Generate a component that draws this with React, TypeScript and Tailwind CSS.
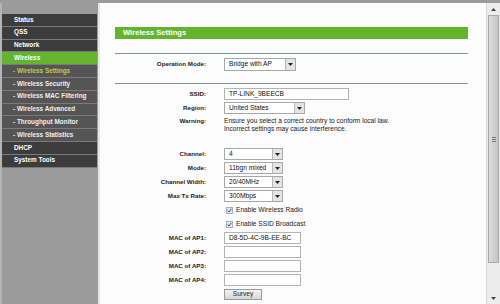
import React from "react";

const menu: { label: string; kind: "main" | "active" | "sub" | "current" }[] = [
  { label: "Status", kind: "main" },
  { label: "QSS", kind: "main" },
  { label: "Network", kind: "main" },
  { label: "Wireless", kind: "active" },
  { label: "- Wireless Settings", kind: "current" },
  { label: "- Wireless Security", kind: "sub" },
  { label: "- Wireless MAC Filtering", kind: "sub" },
  { label: "- Wireless Advanced", kind: "sub" },
  { label: "- Throughput Monitor", kind: "sub" },
  { label: "- Wireless Statistics", kind: "sub" },
  { label: "DHCP", kind: "main" },
  { label: "System Tools", kind: "main" },
];

const Arrow = () => (
  <span className="flex h-full w-[10px] items-center justify-center border-l border-[#b8b8b8] bg-[#e4e4e4]">
    <svg width="5" height="3" viewBox="0 0 5 3">
      <path d="M0 0h5L2.5 3z" fill="#222" />
    </svg>
  </span>
);

const Select = ({ value, w }: { value: string; w: string }) => (
  <div className={`flex h-[12px] ${w} items-center border border-[#a8a8a8] bg-white`}>
    <span className="flex-1 pl-[4px] text-[6.6px] leading-none text-[#111]">{value}</span>
    <Arrow />
  </div>
);

const Input = ({ value, w }: { value?: string; w: string }) => (
  <div className={`flex h-[12px] ${w} items-center border border-[#b4b4b4] bg-white pl-[4px] text-[6.6px] leading-none text-[#111]`}>
    {value}
  </div>
);

const Row = ({ label, children, h = "h-[14px]" }: { label: string; children?: React.ReactNode; h?: string }) => (
  <div className={`flex ${h} items-center`}>
    <div className="w-[92px] pr-[1px] text-right text-[6.2px] font-bold leading-none text-[#222]">{label}</div>
    <div className="ml-[17px] flex items-center">{children}</div>
  </div>
);

const Check = ({ label }: { label: string }) => (
  <div className="flex h-[14px] items-center pl-[109px]">
    <span className="ml-[2px] flex h-[7px] w-[7px] items-center justify-center border border-[#9fb0c4] bg-[#dfe7f1]">
      <svg width="5" height="5" viewBox="0 0 5 5">
        <path d="M0.6 2.6l1.3 1.4L4.4 0.8" stroke="#3a4a70" strokeWidth="1" fill="none" />
      </svg>
    </span>
    <span className="ml-[3px] text-[6.6px] leading-none text-[#222]">{label}</span>
  </div>
);

export default function App() {
  return (
    <div
      className="flex h-[304px] w-[500px] overflow-hidden bg-[#9b9b9b] pt-[3px]"
      style={{ fontFamily: '"Liberation Sans", Arial, sans-serif' }}
    >
      <aside className="w-[98px] border-l-[2px] border-[#b4b4b4] pt-[11px]">
        {menu.map((m) => (
          <div
            key={m.label}
            className={`flex h-[12.8px] w-[95px] items-center border-b border-[#7a7a7a] text-[6.4px] font-bold leading-none ${
              m.kind === "main"
                ? "bg-[#3c3c3c] pl-[12px] text-white"
                : m.kind === "active"
                ? "bg-[#62b52d] pl-[12px] text-white"
                : m.kind === "current"
                ? "bg-[#555555] pl-[11px] text-[#b6d33c]"
                : "bg-[#555555] pl-[11px] text-[#f0f0f0]"
            }`}
          >
            {m.label}
          </div>
        ))}
      </aside>
      <main className="flex-1 border-l-[2px] border-[#e6e6e6] bg-[#fcfcfc] pl-[15px] pt-[24px]">
        <div className="w-[353px]">
          <div className="flex h-[12px] items-center bg-[#63b52d] pl-[8px] text-[7.6px] font-bold leading-none text-white">
            Wireless Settings
          </div>
          <div className="mt-[14px] h-px bg-[#7c9999]" />
          <div className="pt-[3px]">
            <Row label="Operation Mode:" h="h-[14px]">
              <Select value="Bridge with AP" w="w-[72px] h-[13px]" />
            </Row>
          </div>
          <div className="mt-[12px] h-px bg-[#7c9999]" />
          <div className="pt-[3px]">
            <Row label="SSID:">
              <Input value="TP-LINK_9BEECB" w="w-[125px]" />
            </Row>
            <Row label="Region:">
              <Select value="United States" w="w-[81px]" />
            </Row>
            <div className="flex h-[22px] items-start pt-[2px]">
              <div className="w-[92px] pr-[1px] pt-[1px] text-right text-[6.2px] font-bold leading-none text-[#222]">
                Warning:
              </div>
              <div className="ml-[17px] text-[6.6px] leading-[8px] text-[#222]">
                Ensure you select a correct country to conform local law.
                <br />
                Incorrect settings may cause interference.
              </div>
            </div>
            <div className="h-[10px]" />
            <Row label="Channel:">
              <Select value="4" w="w-[59px]" />
            </Row>
            <Row label="Mode:">
              <Select value="11bgn mixed" w="w-[59px]" />
            </Row>
            <Row label="Channel Width:">
              <Select value="20/40MHz" w="w-[59px]" />
            </Row>
            <Row label="Max Tx Rate:">
              <Select value="300Mbps" w="w-[59px]" />
            </Row>
            <Check label="Enable Wireless Radio" />
            <Check label="Enable SSID Broadcast" />
            <Row label="MAC of AP1:">
              <Input value="D8-5D-4C-9B-EE-BC" w="w-[77px]" />
            </Row>
            <Row label="MAC of AP2:">
              <Input w="w-[77px]" />
            </Row>
            <Row label="MAC of AP3:">
              <Input w="w-[77px]" />
            </Row>
            <Row label="MAC of AP4:">
              <Input w="w-[77px]" />
            </Row>
            <div className="flex h-[14px] items-center pl-[109px]">
              <button className="flex h-[11px] w-[38px] items-center justify-center border border-[#9a9a9a] bg-gradient-to-b from-[#f4f4f4] to-[#d6d6d6] text-[6.6px] leading-none text-[#222]">
                Survey
              </button>
            </div>
          </div>
        </div>
      </main>
      <div className="flex w-[14px] flex-col border-l border-[#d8d8d8] bg-[#ececec]">
        <div className="flex h-[12px] items-center justify-center">
          <svg width="5" height="3" viewBox="0 0 5 3">
            <path d="M0 3h5L2.5 0z" fill="#444" />
          </svg>
        </div>
        <div className="mx-[1px] flex h-[248px] items-center justify-center border border-[#a9a9a9] bg-gradient-to-r from-[#dcdcdc] to-[#c4c4c4]">
          <div className="flex flex-col gap-[1px]">
            <span className="block h-px w-[4px] bg-[#777]" />
            <span className="block h-px w-[4px] bg-[#777]" />
            <span className="block h-px w-[4px] bg-[#777]" />
          </div>
        </div>
        <div className="flex-1" />
        <div className="flex h-[12px] items-center justify-center">
          <svg width="5" height="3" viewBox="0 0 5 3">
            <path d="M0 0h5L2.5 3z" fill="#444" />
          </svg>
        </div>
      </div>
    </div>
  );
}
